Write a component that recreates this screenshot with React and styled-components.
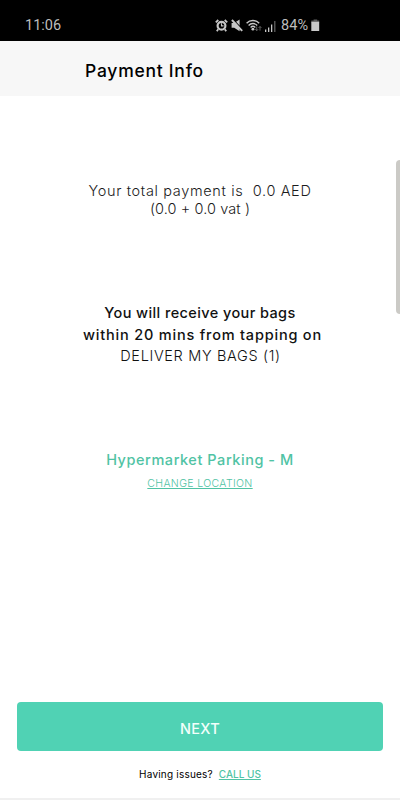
import React from 'react';
import styled, { createGlobalStyle } from 'styled-components';

const AlarmIcon = () => (
  <svg width="13" height="13" viewBox="0 0 13 13" fill="none">
    <circle cx="6.5" cy="6.7" r="3.9" stroke="#c6c6c6" strokeWidth="2.2" />
    <path d="M6.5 4.3v2.6h2" stroke="#c6c6c6" strokeWidth="1.1" />
    <path d="M0.8 3.4 3.3 1M12.2 3.4 9.7 1M3.2 10.2 1.8 12.2M9.8 10.2l1.4 2" stroke="#c6c6c6" strokeWidth="1.8" />
  </svg>
);

const MutedIcon = () => (
  <svg width="12" height="13" viewBox="0 0 12 13">
    <path d="M0.6 3.9h2.6L8.6 0.6v11.6L3.2 8.8H0.6z" fill="#c6c6c6" />
    <path d="M1.8 0.2 12 10.8" stroke="#000" strokeWidth="1.2" />
    <path d="M0.9 1 11.2 11.8" stroke="#c6c6c6" strokeWidth="1.9" />
  </svg>
);

const WifiIcon = () => (
  <svg width="16" height="13" viewBox="0 0 16 13" fill="none">
    <path d="M0.6 4.2C4 .6 9.8.6 13.2 4.2M2.6 6.4c2.4-2.5 6.2-2.5 8.6 0M4.6 8.4c1.4-1.3 3.3-1.3 4.7 0" stroke="#c6c6c6" strokeWidth="1.4" />
    <circle cx="6.9" cy="10.2" r="1.4" fill="#c6c6c6" />
    <path d="M10.7 7.6v4M9.3 10.2l1.4 1.6 1.4-1.6M14 11.6v-4M12.6 9l1.4-1.6L15.4 9" stroke="#666" strokeWidth="0.9" />
  </svg>
);

const SignalIcon = () => (
  <svg width="11" height="12" viewBox="0 0 11 12">
    <path d="M0 9.5h1.3V12H0zM3 7.4h1.3V12H3zM6 4.4h1.3V12H6z" fill="#c6c6c6" />
    <path d="M9.2 1h1.2v11H9.2z" fill="#666" />
  </svg>
);

const BatteryIcon = () => (
  <svg width="9" height="13" viewBox="0 0 9 13">
    <path d="M2.6 0.4h3.6v1.2h2v2H.3v-2h2.3z" fill="#5c5c5c" />
    <path d="M.3 2.8h7.9v9.2H.3z" fill="#c9c9c9" />
  </svg>
);

const App = () => (
  <>
    <GlobalStyle />
    <Screen>
      <StatusBar>
        <Clock>11:06</Clock>
        <StatusIcons>
          <AlarmIcon />
          <MutedIcon />
          <WifiIcon />
          <SignalIcon />
          <BatteryLevel>84%</BatteryLevel>
          <BatteryIcon />
        </StatusIcons>
      </StatusBar>
      <Header>
        <Title>Payment Info</Title>
      </Header>
      <Content>
        <Summary>
          <SummaryLine $spacing="0.65px">{'Your total payment is  0.0 AED'}</SummaryLine>
          <SummaryLine $spacing="0.1px">(0.0 + 0.0 vat )</SummaryLine>
        </Summary>
        <Notice>
          <NoticeLine $spacing="0.4px">You will receive your bags</NoticeLine>
          <NoticeLine $spacing="0.8px" $indent="5px">within 20 mins from tapping on</NoticeLine>
          <NoticeLine $light $spacing="0.65px" $indent="1px">DELIVER MY BAGS (1)</NoticeLine>
        </Notice>
        <Location>
          <Place>Hypermarket Parking - M</Place>
          <ChangeLink href="#">CHANGE LOCATION</ChangeLink>
        </Location>
      </Content>
      <Footer>
        <NextButton>NEXT</NextButton>
        <Help>
          <HelpText>Having issues?</HelpText>
          <CallLink href="#">CALL US</CallLink>
        </Help>
      </Footer>
      <EdgeHandle />
    </Screen>
  </>
);

export default App;

// Styled Components
const GlobalStyle = createGlobalStyle`
  * {
    box-sizing: border-box;
  }

  body {
    margin: 0;
    background: #fff;
    font-family: Inter, 'Open Sans', sans-serif;
  }
`;

const Screen = styled.div`
  position: relative;
  display: flex;
  flex-direction: column;
  width: 400px;
  height: 800px;
  overflow: hidden;
  background: #fff;
  border-bottom: 2px solid #f0f0f0;
`;

const StatusBar = styled.div`
  display: flex;
  justify-content: space-between;
  flex-shrink: 0;
  height: 41px;
  padding: 16px 80px 0 25px;
  background: #000;
  color: #bdbdbd;
  font-family: Roboto, sans-serif;
  font-size: 14.5px;
  line-height: 20px;
`;

const Clock = styled.span`
  letter-spacing: 0;
`;

const StatusIcons = styled.div`
  display: flex;
  align-items: center;
  gap: 3px;
  height: 19px;
`;

const BatteryLevel = styled.span`
  margin-left: 2px;
`;

const Header = styled.header`
  display: flex;
  align-items: center;
  flex-shrink: 0;
  height: 55px;
  padding: 4px 0 0 85px;
  background: #f7f7f7;
`;

const Title = styled.h1`
  margin: 0;
  color: #000;
  font-size: 17.5px;
  font-weight: 450;
  letter-spacing: 0.75px;
`;

const Content = styled.main`
  flex: 1;
  padding-top: 86px;
  text-align: center;
  white-space: pre;
`;

const Summary = styled.section`
  margin-bottom: 84px;
`;

const SummaryLine = styled.p`
  margin: 0;
  color: #1c1c1c;
  font-size: 14.5px;
  font-weight: 300;
  line-height: 18px;
  letter-spacing: ${({ $spacing }) => $spacing};
`;

const Notice = styled.section`
  margin-bottom: 81px;
`;

const NoticeLine = styled.p`
  margin: 0;
  padding-left: ${({ $indent }) => $indent || 0};
  color: #111;
  font-size: 14.5px;
  font-weight: ${({ $light }) => ($light ? 300 : 500)};
  line-height: 21.5px;
  letter-spacing: ${({ $spacing }) => $spacing};
`;

const Location = styled.section`
  display: flex;
  flex-direction: column;
  align-items: center;
`;

const Place = styled.strong`
  color: #50c3a4;
  font-size: 14.5px;
  font-weight: 500;
  line-height: 23px;
  letter-spacing: 0.55px;
`;

const ChangeLink = styled.a`
  color: #50c3a4;
  font-size: 10.5px;
  font-weight: 300;
  line-height: 26px;
  letter-spacing: 0.35px;
  text-underline-offset: 1px;
`;

const Footer = styled.footer`
  display: flex;
  flex-direction: column;
  flex-shrink: 0;
  height: 96px;
  padding: 0 17px;
`;

const NextButton = styled.button`
  height: 49px;
  padding: 3px 0 0;
  border: none;
  border-radius: 4px;
  background: #50d2b4;
  color: #f2fffb;
  font-family: inherit;
  font-size: 14.5px;
  font-weight: 500;
  letter-spacing: 0.3px;
`;

const Help = styled.div`
  display: flex;
  justify-content: center;
  gap: 6px;
  margin-top: 15px;
  font-size: 10px;
  line-height: 16px;
`;

const HelpText = styled.span`
  color: #000;
  letter-spacing: 0.2px;
`;

const CallLink = styled.a`
  color: #50c3a4;
  font-weight: 500;
  text-underline-offset: 1px;
`;

/* edge panel handle floating over the page */
const EdgeHandle = styled.div`
  position: absolute;
  top: 160px;
  right: 0;
  width: 4px;
  height: 154px;
  border-radius: 4px 0 0 4px;
  background: #cbcac6;
`;
